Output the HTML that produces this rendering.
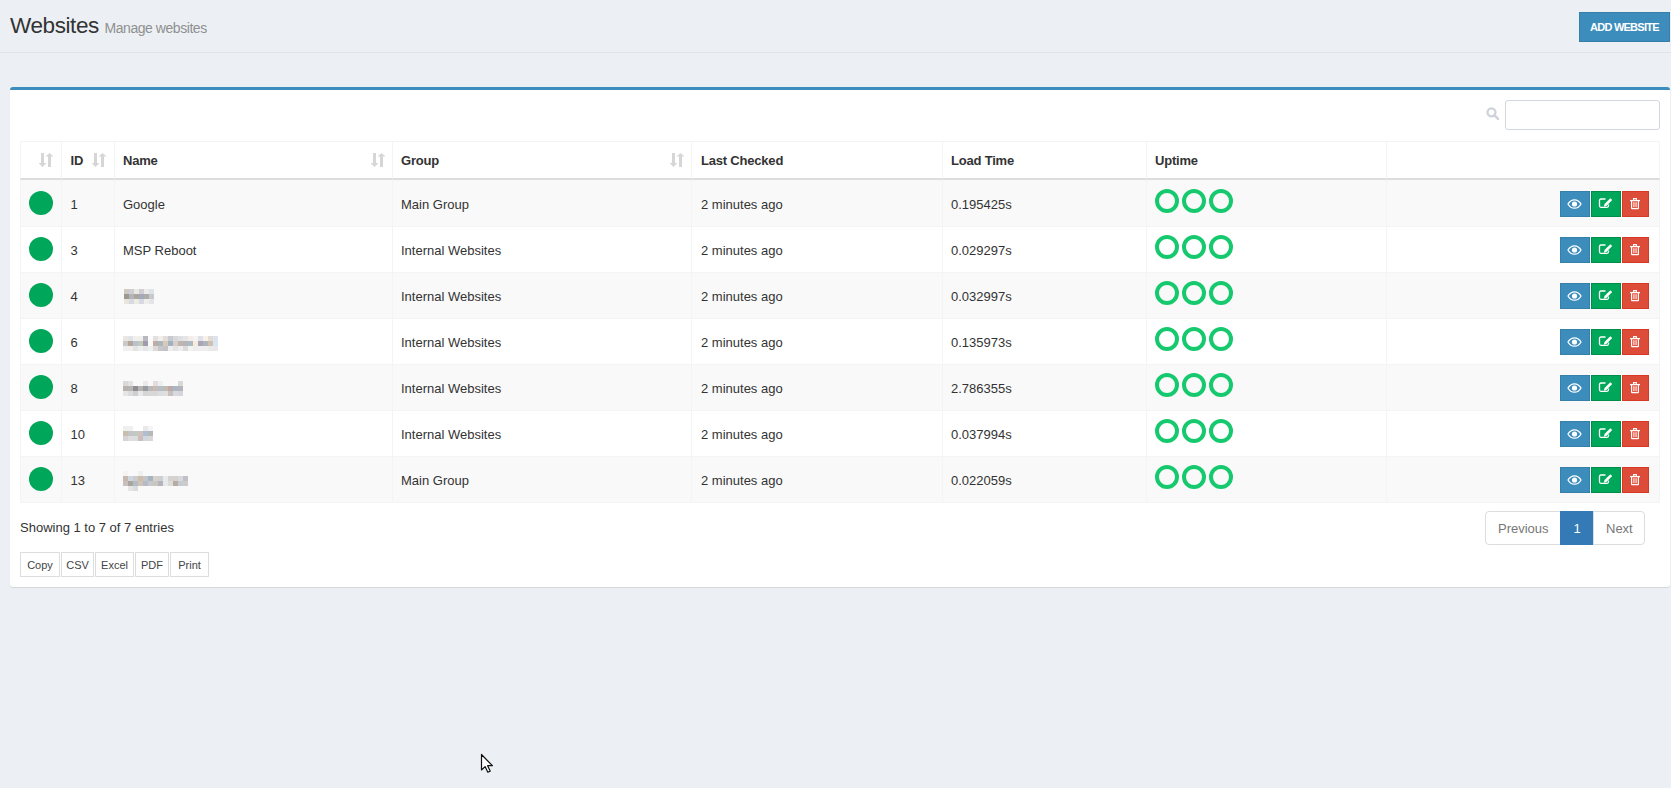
<!DOCTYPE html><html><head><meta charset="utf-8"><style>
html,body{margin:0;padding:0;width:1671px;height:788px;overflow:hidden;background:#ecf0f5;font-family:"Liberation Sans",sans-serif;}
.t{position:absolute;white-space:nowrap;line-height:1;}
.a{position:absolute;}
</style></head><body>
<div class="t" style="left:10px;top:14.55px;font-size:22.5px;color:#333;font-weight:normal;letter-spacing:-0.4px;">Websites</div>
<div class="t" style="left:104.5px;top:20.95px;font-size:14px;color:#8f8f8f;font-weight:normal;letter-spacing:-0.45px;">Manage websites</div>
<div class="a" style="left:0;top:52px;width:1671px;height:1px;background:#e0e3e7"></div>
<div class="a" style="left:1579px;top:12px;width:89px;height:28px;background:#3c8dbc;border:1px solid #367fa9;border-radius:0"></div>
<div class="t" style="left:1590px;top:21.69px;font-size:11px;color:#fff;font-weight:bold;letter-spacing:-0.75px;">ADD WEBSITE</div>
<div class="a" style="left:10px;top:87px;width:1660px;height:500px;background:#fff;border-top:3px solid #3c8dbc;border-radius:3px;box-shadow:0 1px 1px rgba(0,0,0,0.1);box-sizing:border-box"></div>
<svg class="a" style="left:1486px;top:107px" width="14" height="14" viewBox="0 0 14 14"><circle cx="5.5" cy="5.3" r="4" fill="none" stroke="#ced2db" stroke-width="2.3"/><line x1="8.4" y1="8.2" x2="12" y2="11.8" stroke="#ced2db" stroke-width="2.5" stroke-linecap="round"/></svg>
<div class="a" style="left:1505px;top:100px;width:155px;height:30px;box-sizing:border-box;border:1px solid #d2d6de;border-radius:3px;background:#fff"></div>
<div class="a" style="left:20px;top:180px;width:1639px;height:46px;background:#f9f9f9"></div>
<div class="a" style="left:20px;top:226px;width:1639px;height:46px;background:#fff"></div>
<div class="a" style="left:20px;top:272px;width:1639px;height:46px;background:#f9f9f9"></div>
<div class="a" style="left:20px;top:318px;width:1639px;height:46px;background:#fff"></div>
<div class="a" style="left:20px;top:364px;width:1639px;height:46px;background:#f9f9f9"></div>
<div class="a" style="left:20px;top:410px;width:1639px;height:46px;background:#fff"></div>
<div class="a" style="left:20px;top:456px;width:1639px;height:46px;background:#f9f9f9"></div>
<div class="a" style="left:20px;top:141px;width:1639px;height:1px;background:#f4f4f4"></div>
<div class="a" style="left:20px;top:178px;width:1639px;height:2px;background:#ddd"></div>
<div class="a" style="left:20px;top:226px;width:1639px;height:1px;background:#f4f4f4"></div>
<div class="a" style="left:20px;top:272px;width:1639px;height:1px;background:#f4f4f4"></div>
<div class="a" style="left:20px;top:318px;width:1639px;height:1px;background:#f4f4f4"></div>
<div class="a" style="left:20px;top:364px;width:1639px;height:1px;background:#f4f4f4"></div>
<div class="a" style="left:20px;top:410px;width:1639px;height:1px;background:#f4f4f4"></div>
<div class="a" style="left:20px;top:456px;width:1639px;height:1px;background:#f4f4f4"></div>
<div class="a" style="left:20px;top:502px;width:1639px;height:1px;background:#f4f4f4"></div>
<div class="a" style="left:20px;top:141px;width:1px;height:362px;background:#f4f4f4"></div>
<div class="a" style="left:61px;top:141px;width:1px;height:362px;background:#f4f4f4"></div>
<div class="a" style="left:114px;top:141px;width:1px;height:362px;background:#f4f4f4"></div>
<div class="a" style="left:392px;top:141px;width:1px;height:362px;background:#f4f4f4"></div>
<div class="a" style="left:691px;top:141px;width:1px;height:362px;background:#f4f4f4"></div>
<div class="a" style="left:942px;top:141px;width:1px;height:362px;background:#f4f4f4"></div>
<div class="a" style="left:1146px;top:141px;width:1px;height:362px;background:#f4f4f4"></div>
<div class="a" style="left:1386px;top:141px;width:1px;height:362px;background:#f4f4f4"></div>
<div class="a" style="left:1659px;top:141px;width:1px;height:362px;background:#f4f4f4"></div>
<div class="a" style="left:20px;top:178px;width:1640px;height:2px;background:#ddd"></div>
<div class="a" style="left:20px;top:178px;width:1px;height:2px;background:#e6e6e6"></div>
<div class="a" style="left:61px;top:178px;width:1px;height:2px;background:#e6e6e6"></div>
<div class="a" style="left:114px;top:178px;width:1px;height:2px;background:#e6e6e6"></div>
<div class="a" style="left:392px;top:178px;width:1px;height:2px;background:#e6e6e6"></div>
<div class="a" style="left:691px;top:178px;width:1px;height:2px;background:#e6e6e6"></div>
<div class="a" style="left:942px;top:178px;width:1px;height:2px;background:#e6e6e6"></div>
<div class="a" style="left:1146px;top:178px;width:1px;height:2px;background:#e6e6e6"></div>
<div class="a" style="left:1386px;top:178px;width:1px;height:2px;background:#e6e6e6"></div>
<div class="a" style="left:1659px;top:178px;width:1px;height:2px;background:#e6e6e6"></div>
<div class="t" style="left:70.5px;top:154.00px;font-size:13px;color:#333;font-weight:bold;letter-spacing:-0.2px;">ID</div>
<div class="t" style="left:123px;top:154.00px;font-size:13px;color:#333;font-weight:bold;letter-spacing:-0.2px;">Name</div>
<div class="t" style="left:401px;top:154.00px;font-size:13px;color:#333;font-weight:bold;letter-spacing:-0.2px;">Group</div>
<div class="t" style="left:701px;top:154.00px;font-size:13px;color:#333;font-weight:bold;letter-spacing:-0.2px;">Last Checked</div>
<div class="t" style="left:951px;top:154.00px;font-size:13px;color:#333;font-weight:bold;letter-spacing:-0.2px;">Load Time</div>
<div class="t" style="left:1155px;top:154.00px;font-size:13px;color:#333;font-weight:bold;letter-spacing:-0.2px;">Uptime</div>
<svg class="a" style="left:39px;top:152px" width="16" height="16" viewBox="0 0 16 16"><path d="M2 1h3v10h2.5l-4 4l-4-4h2.5z" fill="#d6d6d6"/><path d="M9 15h3v-10.5h2.5l-4-3.5l-4 3.5h2.5z" fill="#d6d6d6"/></svg>
<svg class="a" style="left:92px;top:152px" width="16" height="16" viewBox="0 0 16 16"><path d="M2 1h3v10h2.5l-4 4l-4-4h2.5z" fill="#d6d6d6"/><path d="M9 15h3v-10.5h2.5l-4-3.5l-4 3.5h2.5z" fill="#d6d6d6"/></svg>
<svg class="a" style="left:371px;top:152px" width="16" height="16" viewBox="0 0 16 16"><path d="M2 1h3v10h2.5l-4 4l-4-4h2.5z" fill="#d6d6d6"/><path d="M9 15h3v-10.5h2.5l-4-3.5l-4 3.5h2.5z" fill="#d6d6d6"/></svg>
<svg class="a" style="left:670px;top:152px" width="16" height="16" viewBox="0 0 16 16"><path d="M2 1h3v10h2.5l-4 4l-4-4h2.5z" fill="#d6d6d6"/><path d="M9 15h3v-10.5h2.5l-4-3.5l-4 3.5h2.5z" fill="#d6d6d6"/></svg>
<div class="a" style="left:29px;top:191px;width:24px;height:24px;border-radius:50%;background:#00a65a"></div>
<div class="t" style="left:70.5px;top:198.00px;font-size:13px;color:#333;font-weight:normal;letter-spacing:0px;">1</div>
<div class="t" style="left:123px;top:198.00px;font-size:13px;color:#333;font-weight:normal;letter-spacing:0px;">Google</div>
<div class="t" style="left:401px;top:198.00px;font-size:13px;color:#333;font-weight:normal;letter-spacing:0px;">Main Group</div>
<div class="t" style="left:701px;top:198.00px;font-size:13px;color:#333;font-weight:normal;letter-spacing:0px;">2 minutes ago</div>
<div class="t" style="left:951px;top:198.00px;font-size:13px;color:#333;font-weight:normal;letter-spacing:0px;">0.195425s</div>
<div class="a" style="left:1155px;top:189px;width:24px;height:24px;box-sizing:border-box;border-radius:50%;border:4px solid #17c96e"></div>
<div class="a" style="left:1182px;top:189px;width:24px;height:24px;box-sizing:border-box;border-radius:50%;border:4px solid #17c96e"></div>
<div class="a" style="left:1209px;top:189px;width:24px;height:24px;box-sizing:border-box;border-radius:50%;border:4px solid #17c96e"></div>
<div class="a" style="left:1560px;top:191px;width:28px;height:24px;background:#3c8dbc;border:1px solid #367fa9"></div>
<div class="a" style="left:1591px;top:191px;width:28px;height:24px;background:#00a65a;border:1px solid #008d4c"></div>
<div class="a" style="left:1622px;top:191px;width:25px;height:24px;background:#dd4b39;border:1px solid #d73925"></div>
<svg class="a" style="left:1567px;top:199px" width="15" height="10" viewBox="0 0 15 10"><path d="M1 5C3 1.5 5.2 0.8 7.5 0.8S12 1.5 14 5C12 8.5 9.8 9.2 7.5 9.2S3 8.5 1 5z" fill="none" stroke="#fff" stroke-width="1.3"/><circle cx="7.5" cy="5" r="2.6" fill="#fff"/></svg>
<svg class="a" style="left:1598px;top:197px" width="15" height="13" viewBox="0 0 15 13"><path d="M7.5 2H3Q1.5 2 1.5 3.5V8.8Q1.5 10.3 3 10.3H9Q10.5 10.3 10.5 8.8V7.5" fill="none" stroke="#fff" stroke-width="1.3"/><path d="M12.3 1.2l1.9 1.9l-5.8 5.8l-2.6 0.8l0.7-2.6z" fill="#fff"/></svg>
<svg class="a" style="left:1629px;top:197px" width="12" height="13" viewBox="0 0 12 13"><path d="M1 3.6h10" stroke="#fff" stroke-width="1.3"/><path d="M4.6 3.4V1.6h2.8V3.4" fill="none" stroke="#fff" stroke-width="1.1"/><path d="M2.6 3.8V11.2Q2.6 11.6 3 11.6H9Q9.4 11.6 9.4 11.2V3.8" fill="none" stroke="#fff" stroke-width="1.2"/><path d="M4.7 5.2V10.2M6 5.2V10.2M7.3 5.2V10.2" stroke="#fff" stroke-width="0.75"/></svg>
<div class="a" style="left:29px;top:237px;width:24px;height:24px;border-radius:50%;background:#00a65a"></div>
<div class="t" style="left:70.5px;top:244.00px;font-size:13px;color:#333;font-weight:normal;letter-spacing:0px;">3</div>
<div class="t" style="left:123px;top:244.00px;font-size:13px;color:#333;font-weight:normal;letter-spacing:0px;">MSP Reboot</div>
<div class="t" style="left:401px;top:244.00px;font-size:13px;color:#333;font-weight:normal;letter-spacing:0px;">Internal Websites</div>
<div class="t" style="left:701px;top:244.00px;font-size:13px;color:#333;font-weight:normal;letter-spacing:0px;">2 minutes ago</div>
<div class="t" style="left:951px;top:244.00px;font-size:13px;color:#333;font-weight:normal;letter-spacing:0px;">0.029297s</div>
<div class="a" style="left:1155px;top:235px;width:24px;height:24px;box-sizing:border-box;border-radius:50%;border:4px solid #17c96e"></div>
<div class="a" style="left:1182px;top:235px;width:24px;height:24px;box-sizing:border-box;border-radius:50%;border:4px solid #17c96e"></div>
<div class="a" style="left:1209px;top:235px;width:24px;height:24px;box-sizing:border-box;border-radius:50%;border:4px solid #17c96e"></div>
<div class="a" style="left:1560px;top:237px;width:28px;height:24px;background:#3c8dbc;border:1px solid #367fa9"></div>
<div class="a" style="left:1591px;top:237px;width:28px;height:24px;background:#00a65a;border:1px solid #008d4c"></div>
<div class="a" style="left:1622px;top:237px;width:25px;height:24px;background:#dd4b39;border:1px solid #d73925"></div>
<svg class="a" style="left:1567px;top:245px" width="15" height="10" viewBox="0 0 15 10"><path d="M1 5C3 1.5 5.2 0.8 7.5 0.8S12 1.5 14 5C12 8.5 9.8 9.2 7.5 9.2S3 8.5 1 5z" fill="none" stroke="#fff" stroke-width="1.3"/><circle cx="7.5" cy="5" r="2.6" fill="#fff"/></svg>
<svg class="a" style="left:1598px;top:243px" width="15" height="13" viewBox="0 0 15 13"><path d="M7.5 2H3Q1.5 2 1.5 3.5V8.8Q1.5 10.3 3 10.3H9Q10.5 10.3 10.5 8.8V7.5" fill="none" stroke="#fff" stroke-width="1.3"/><path d="M12.3 1.2l1.9 1.9l-5.8 5.8l-2.6 0.8l0.7-2.6z" fill="#fff"/></svg>
<svg class="a" style="left:1629px;top:243px" width="12" height="13" viewBox="0 0 12 13"><path d="M1 3.6h10" stroke="#fff" stroke-width="1.3"/><path d="M4.6 3.4V1.6h2.8V3.4" fill="none" stroke="#fff" stroke-width="1.1"/><path d="M2.6 3.8V11.2Q2.6 11.6 3 11.6H9Q9.4 11.6 9.4 11.2V3.8" fill="none" stroke="#fff" stroke-width="1.2"/><path d="M4.7 5.2V10.2M6 5.2V10.2M7.3 5.2V10.2" stroke="#fff" stroke-width="0.75"/></svg>
<div class="a" style="left:29px;top:283px;width:24px;height:24px;border-radius:50%;background:#00a65a"></div>
<div class="t" style="left:70.5px;top:290.00px;font-size:13px;color:#333;font-weight:normal;letter-spacing:0px;">4</div>
<div class="t" style="left:401px;top:290.00px;font-size:13px;color:#333;font-weight:normal;letter-spacing:0px;">Internal Websites</div>
<div class="t" style="left:701px;top:290.00px;font-size:13px;color:#333;font-weight:normal;letter-spacing:0px;">2 minutes ago</div>
<div class="t" style="left:951px;top:290.00px;font-size:13px;color:#333;font-weight:normal;letter-spacing:0px;">0.032997s</div>
<div class="a" style="left:1155px;top:281px;width:24px;height:24px;box-sizing:border-box;border-radius:50%;border:4px solid #17c96e"></div>
<div class="a" style="left:1182px;top:281px;width:24px;height:24px;box-sizing:border-box;border-radius:50%;border:4px solid #17c96e"></div>
<div class="a" style="left:1209px;top:281px;width:24px;height:24px;box-sizing:border-box;border-radius:50%;border:4px solid #17c96e"></div>
<div class="a" style="left:1560px;top:283px;width:28px;height:24px;background:#3c8dbc;border:1px solid #367fa9"></div>
<div class="a" style="left:1591px;top:283px;width:28px;height:24px;background:#00a65a;border:1px solid #008d4c"></div>
<div class="a" style="left:1622px;top:283px;width:25px;height:24px;background:#dd4b39;border:1px solid #d73925"></div>
<svg class="a" style="left:1567px;top:291px" width="15" height="10" viewBox="0 0 15 10"><path d="M1 5C3 1.5 5.2 0.8 7.5 0.8S12 1.5 14 5C12 8.5 9.8 9.2 7.5 9.2S3 8.5 1 5z" fill="none" stroke="#fff" stroke-width="1.3"/><circle cx="7.5" cy="5" r="2.6" fill="#fff"/></svg>
<svg class="a" style="left:1598px;top:289px" width="15" height="13" viewBox="0 0 15 13"><path d="M7.5 2H3Q1.5 2 1.5 3.5V8.8Q1.5 10.3 3 10.3H9Q10.5 10.3 10.5 8.8V7.5" fill="none" stroke="#fff" stroke-width="1.3"/><path d="M12.3 1.2l1.9 1.9l-5.8 5.8l-2.6 0.8l0.7-2.6z" fill="#fff"/></svg>
<svg class="a" style="left:1629px;top:289px" width="12" height="13" viewBox="0 0 12 13"><path d="M1 3.6h10" stroke="#fff" stroke-width="1.3"/><path d="M4.6 3.4V1.6h2.8V3.4" fill="none" stroke="#fff" stroke-width="1.1"/><path d="M2.6 3.8V11.2Q2.6 11.6 3 11.6H9Q9.4 11.6 9.4 11.2V3.8" fill="none" stroke="#fff" stroke-width="1.2"/><path d="M4.7 5.2V10.2M6 5.2V10.2M7.3 5.2V10.2" stroke="#fff" stroke-width="0.75"/></svg>
<div class="a" style="left:29px;top:329px;width:24px;height:24px;border-radius:50%;background:#00a65a"></div>
<div class="t" style="left:70.5px;top:336.00px;font-size:13px;color:#333;font-weight:normal;letter-spacing:0px;">6</div>
<div class="t" style="left:401px;top:336.00px;font-size:13px;color:#333;font-weight:normal;letter-spacing:0px;">Internal Websites</div>
<div class="t" style="left:701px;top:336.00px;font-size:13px;color:#333;font-weight:normal;letter-spacing:0px;">2 minutes ago</div>
<div class="t" style="left:951px;top:336.00px;font-size:13px;color:#333;font-weight:normal;letter-spacing:0px;">0.135973s</div>
<div class="a" style="left:1155px;top:327px;width:24px;height:24px;box-sizing:border-box;border-radius:50%;border:4px solid #17c96e"></div>
<div class="a" style="left:1182px;top:327px;width:24px;height:24px;box-sizing:border-box;border-radius:50%;border:4px solid #17c96e"></div>
<div class="a" style="left:1209px;top:327px;width:24px;height:24px;box-sizing:border-box;border-radius:50%;border:4px solid #17c96e"></div>
<div class="a" style="left:1560px;top:329px;width:28px;height:24px;background:#3c8dbc;border:1px solid #367fa9"></div>
<div class="a" style="left:1591px;top:329px;width:28px;height:24px;background:#00a65a;border:1px solid #008d4c"></div>
<div class="a" style="left:1622px;top:329px;width:25px;height:24px;background:#dd4b39;border:1px solid #d73925"></div>
<svg class="a" style="left:1567px;top:337px" width="15" height="10" viewBox="0 0 15 10"><path d="M1 5C3 1.5 5.2 0.8 7.5 0.8S12 1.5 14 5C12 8.5 9.8 9.2 7.5 9.2S3 8.5 1 5z" fill="none" stroke="#fff" stroke-width="1.3"/><circle cx="7.5" cy="5" r="2.6" fill="#fff"/></svg>
<svg class="a" style="left:1598px;top:335px" width="15" height="13" viewBox="0 0 15 13"><path d="M7.5 2H3Q1.5 2 1.5 3.5V8.8Q1.5 10.3 3 10.3H9Q10.5 10.3 10.5 8.8V7.5" fill="none" stroke="#fff" stroke-width="1.3"/><path d="M12.3 1.2l1.9 1.9l-5.8 5.8l-2.6 0.8l0.7-2.6z" fill="#fff"/></svg>
<svg class="a" style="left:1629px;top:335px" width="12" height="13" viewBox="0 0 12 13"><path d="M1 3.6h10" stroke="#fff" stroke-width="1.3"/><path d="M4.6 3.4V1.6h2.8V3.4" fill="none" stroke="#fff" stroke-width="1.1"/><path d="M2.6 3.8V11.2Q2.6 11.6 3 11.6H9Q9.4 11.6 9.4 11.2V3.8" fill="none" stroke="#fff" stroke-width="1.2"/><path d="M4.7 5.2V10.2M6 5.2V10.2M7.3 5.2V10.2" stroke="#fff" stroke-width="0.75"/></svg>
<div class="a" style="left:29px;top:375px;width:24px;height:24px;border-radius:50%;background:#00a65a"></div>
<div class="t" style="left:70.5px;top:382.00px;font-size:13px;color:#333;font-weight:normal;letter-spacing:0px;">8</div>
<div class="t" style="left:401px;top:382.00px;font-size:13px;color:#333;font-weight:normal;letter-spacing:0px;">Internal Websites</div>
<div class="t" style="left:701px;top:382.00px;font-size:13px;color:#333;font-weight:normal;letter-spacing:0px;">2 minutes ago</div>
<div class="t" style="left:951px;top:382.00px;font-size:13px;color:#333;font-weight:normal;letter-spacing:0px;">2.786355s</div>
<div class="a" style="left:1155px;top:373px;width:24px;height:24px;box-sizing:border-box;border-radius:50%;border:4px solid #17c96e"></div>
<div class="a" style="left:1182px;top:373px;width:24px;height:24px;box-sizing:border-box;border-radius:50%;border:4px solid #17c96e"></div>
<div class="a" style="left:1209px;top:373px;width:24px;height:24px;box-sizing:border-box;border-radius:50%;border:4px solid #17c96e"></div>
<div class="a" style="left:1560px;top:375px;width:28px;height:24px;background:#3c8dbc;border:1px solid #367fa9"></div>
<div class="a" style="left:1591px;top:375px;width:28px;height:24px;background:#00a65a;border:1px solid #008d4c"></div>
<div class="a" style="left:1622px;top:375px;width:25px;height:24px;background:#dd4b39;border:1px solid #d73925"></div>
<svg class="a" style="left:1567px;top:383px" width="15" height="10" viewBox="0 0 15 10"><path d="M1 5C3 1.5 5.2 0.8 7.5 0.8S12 1.5 14 5C12 8.5 9.8 9.2 7.5 9.2S3 8.5 1 5z" fill="none" stroke="#fff" stroke-width="1.3"/><circle cx="7.5" cy="5" r="2.6" fill="#fff"/></svg>
<svg class="a" style="left:1598px;top:381px" width="15" height="13" viewBox="0 0 15 13"><path d="M7.5 2H3Q1.5 2 1.5 3.5V8.8Q1.5 10.3 3 10.3H9Q10.5 10.3 10.5 8.8V7.5" fill="none" stroke="#fff" stroke-width="1.3"/><path d="M12.3 1.2l1.9 1.9l-5.8 5.8l-2.6 0.8l0.7-2.6z" fill="#fff"/></svg>
<svg class="a" style="left:1629px;top:381px" width="12" height="13" viewBox="0 0 12 13"><path d="M1 3.6h10" stroke="#fff" stroke-width="1.3"/><path d="M4.6 3.4V1.6h2.8V3.4" fill="none" stroke="#fff" stroke-width="1.1"/><path d="M2.6 3.8V11.2Q2.6 11.6 3 11.6H9Q9.4 11.6 9.4 11.2V3.8" fill="none" stroke="#fff" stroke-width="1.2"/><path d="M4.7 5.2V10.2M6 5.2V10.2M7.3 5.2V10.2" stroke="#fff" stroke-width="0.75"/></svg>
<div class="a" style="left:29px;top:421px;width:24px;height:24px;border-radius:50%;background:#00a65a"></div>
<div class="t" style="left:70.5px;top:428.00px;font-size:13px;color:#333;font-weight:normal;letter-spacing:0px;">10</div>
<div class="t" style="left:401px;top:428.00px;font-size:13px;color:#333;font-weight:normal;letter-spacing:0px;">Internal Websites</div>
<div class="t" style="left:701px;top:428.00px;font-size:13px;color:#333;font-weight:normal;letter-spacing:0px;">2 minutes ago</div>
<div class="t" style="left:951px;top:428.00px;font-size:13px;color:#333;font-weight:normal;letter-spacing:0px;">0.037994s</div>
<div class="a" style="left:1155px;top:419px;width:24px;height:24px;box-sizing:border-box;border-radius:50%;border:4px solid #17c96e"></div>
<div class="a" style="left:1182px;top:419px;width:24px;height:24px;box-sizing:border-box;border-radius:50%;border:4px solid #17c96e"></div>
<div class="a" style="left:1209px;top:419px;width:24px;height:24px;box-sizing:border-box;border-radius:50%;border:4px solid #17c96e"></div>
<div class="a" style="left:1560px;top:421px;width:28px;height:24px;background:#3c8dbc;border:1px solid #367fa9"></div>
<div class="a" style="left:1591px;top:421px;width:28px;height:24px;background:#00a65a;border:1px solid #008d4c"></div>
<div class="a" style="left:1622px;top:421px;width:25px;height:24px;background:#dd4b39;border:1px solid #d73925"></div>
<svg class="a" style="left:1567px;top:429px" width="15" height="10" viewBox="0 0 15 10"><path d="M1 5C3 1.5 5.2 0.8 7.5 0.8S12 1.5 14 5C12 8.5 9.8 9.2 7.5 9.2S3 8.5 1 5z" fill="none" stroke="#fff" stroke-width="1.3"/><circle cx="7.5" cy="5" r="2.6" fill="#fff"/></svg>
<svg class="a" style="left:1598px;top:427px" width="15" height="13" viewBox="0 0 15 13"><path d="M7.5 2H3Q1.5 2 1.5 3.5V8.8Q1.5 10.3 3 10.3H9Q10.5 10.3 10.5 8.8V7.5" fill="none" stroke="#fff" stroke-width="1.3"/><path d="M12.3 1.2l1.9 1.9l-5.8 5.8l-2.6 0.8l0.7-2.6z" fill="#fff"/></svg>
<svg class="a" style="left:1629px;top:427px" width="12" height="13" viewBox="0 0 12 13"><path d="M1 3.6h10" stroke="#fff" stroke-width="1.3"/><path d="M4.6 3.4V1.6h2.8V3.4" fill="none" stroke="#fff" stroke-width="1.1"/><path d="M2.6 3.8V11.2Q2.6 11.6 3 11.6H9Q9.4 11.6 9.4 11.2V3.8" fill="none" stroke="#fff" stroke-width="1.2"/><path d="M4.7 5.2V10.2M6 5.2V10.2M7.3 5.2V10.2" stroke="#fff" stroke-width="0.75"/></svg>
<div class="a" style="left:29px;top:467px;width:24px;height:24px;border-radius:50%;background:#00a65a"></div>
<div class="t" style="left:70.5px;top:474.00px;font-size:13px;color:#333;font-weight:normal;letter-spacing:0px;">13</div>
<div class="t" style="left:401px;top:474.00px;font-size:13px;color:#333;font-weight:normal;letter-spacing:0px;">Main Group</div>
<div class="t" style="left:701px;top:474.00px;font-size:13px;color:#333;font-weight:normal;letter-spacing:0px;">2 minutes ago</div>
<div class="t" style="left:951px;top:474.00px;font-size:13px;color:#333;font-weight:normal;letter-spacing:0px;">0.022059s</div>
<div class="a" style="left:1155px;top:465px;width:24px;height:24px;box-sizing:border-box;border-radius:50%;border:4px solid #17c96e"></div>
<div class="a" style="left:1182px;top:465px;width:24px;height:24px;box-sizing:border-box;border-radius:50%;border:4px solid #17c96e"></div>
<div class="a" style="left:1209px;top:465px;width:24px;height:24px;box-sizing:border-box;border-radius:50%;border:4px solid #17c96e"></div>
<div class="a" style="left:1560px;top:467px;width:28px;height:24px;background:#3c8dbc;border:1px solid #367fa9"></div>
<div class="a" style="left:1591px;top:467px;width:28px;height:24px;background:#00a65a;border:1px solid #008d4c"></div>
<div class="a" style="left:1622px;top:467px;width:25px;height:24px;background:#dd4b39;border:1px solid #d73925"></div>
<svg class="a" style="left:1567px;top:475px" width="15" height="10" viewBox="0 0 15 10"><path d="M1 5C3 1.5 5.2 0.8 7.5 0.8S12 1.5 14 5C12 8.5 9.8 9.2 7.5 9.2S3 8.5 1 5z" fill="none" stroke="#fff" stroke-width="1.3"/><circle cx="7.5" cy="5" r="2.6" fill="#fff"/></svg>
<svg class="a" style="left:1598px;top:473px" width="15" height="13" viewBox="0 0 15 13"><path d="M7.5 2H3Q1.5 2 1.5 3.5V8.8Q1.5 10.3 3 10.3H9Q10.5 10.3 10.5 8.8V7.5" fill="none" stroke="#fff" stroke-width="1.3"/><path d="M12.3 1.2l1.9 1.9l-5.8 5.8l-2.6 0.8l0.7-2.6z" fill="#fff"/></svg>
<svg class="a" style="left:1629px;top:473px" width="12" height="13" viewBox="0 0 12 13"><path d="M1 3.6h10" stroke="#fff" stroke-width="1.3"/><path d="M4.6 3.4V1.6h2.8V3.4" fill="none" stroke="#fff" stroke-width="1.1"/><path d="M2.6 3.8V11.2Q2.6 11.6 3 11.6H9Q9.4 11.6 9.4 11.2V3.8" fill="none" stroke="#fff" stroke-width="1.2"/><path d="M4.7 5.2V10.2M6 5.2V10.2M7.3 5.2V10.2" stroke="#fff" stroke-width="0.75"/></svg>
<div class="a" style="left:124px;top:289px;width:5px;height:5px;background:#cdc9c3"></div>
<div class="a" style="left:129px;top:289px;width:5px;height:5px;background:#d1ced3"></div>
<div class="a" style="left:134px;top:289px;width:5px;height:5px;background:#e9e9e3"></div>
<div class="a" style="left:139px;top:289px;width:5px;height:5px;background:#d1ced3"></div>
<div class="a" style="left:144px;top:289px;width:5px;height:5px;background:#ebebeb"></div>
<div class="a" style="left:149px;top:289px;width:5px;height:5px;background:#dde3e7"></div>
<div class="a" style="left:124px;top:294px;width:5px;height:5px;background:#a09890"></div>
<div class="a" style="left:129px;top:294px;width:5px;height:5px;background:#b1b5b6"></div>
<div class="a" style="left:134px;top:294px;width:5px;height:5px;background:#aba59d"></div>
<div class="a" style="left:139px;top:294px;width:5px;height:5px;background:#a2a9b8"></div>
<div class="a" style="left:144px;top:294px;width:5px;height:5px;background:#aeaca6"></div>
<div class="a" style="left:149px;top:294px;width:5px;height:5px;background:#cac8cf"></div>
<div class="a" style="left:124px;top:299px;width:5px;height:5px;background:#e8e5df"></div>
<div class="a" style="left:129px;top:299px;width:5px;height:5px;background:#d7dae1"></div>
<div class="a" style="left:134px;top:299px;width:5px;height:5px;background:#ecebe4"></div>
<div class="a" style="left:139px;top:299px;width:5px;height:5px;background:#d7dae1"></div>
<div class="a" style="left:144px;top:299px;width:5px;height:5px;background:#efeeea"></div>
<div class="a" style="left:149px;top:299px;width:5px;height:5px;background:#e5e5e9"></div>
<div class="a" style="left:123px;top:336px;width:5px;height:5px;background:#ebe6e3"></div>
<div class="a" style="left:128px;top:336px;width:5px;height:5px;background:#e1e3e7"></div>
<div class="a" style="left:133px;top:336px;width:5px;height:5px;background:#f1f0ed"></div>
<div class="a" style="left:138px;top:336px;width:5px;height:5px;background:#f0f0ee"></div>
<div class="a" style="left:143px;top:336px;width:5px;height:5px;background:#b9b8bf"></div>
<div class="a" style="left:148px;top:336px;width:5px;height:5px;background:#fbfbfb"></div>
<div class="a" style="left:153px;top:336px;width:5px;height:5px;background:#e1e1e1"></div>
<div class="a" style="left:158px;top:336px;width:5px;height:5px;background:#f0efec"></div>
<div class="a" style="left:163px;top:336px;width:5px;height:5px;background:#e3ddd8"></div>
<div class="a" style="left:168px;top:336px;width:5px;height:5px;background:#c7cbd1"></div>
<div class="a" style="left:173px;top:336px;width:5px;height:5px;background:#d8dad9"></div>
<div class="a" style="left:178px;top:336px;width:5px;height:5px;background:#dde1e4"></div>
<div class="a" style="left:183px;top:336px;width:5px;height:5px;background:#e6e6e6"></div>
<div class="a" style="left:188px;top:336px;width:5px;height:5px;background:#f3eeea"></div>
<div class="a" style="left:193px;top:336px;width:5px;height:5px;background:#f4f4f6"></div>
<div class="a" style="left:198px;top:336px;width:5px;height:5px;background:#e0e1e7"></div>
<div class="a" style="left:203px;top:336px;width:5px;height:5px;background:#f7f1ea"></div>
<div class="a" style="left:208px;top:336px;width:5px;height:5px;background:#e1dbd7"></div>
<div class="a" style="left:213px;top:336px;width:5px;height:5px;background:#dce3ec"></div>
<div class="a" style="left:123px;top:341px;width:5px;height:5px;background:#cbc9c7"></div>
<div class="a" style="left:128px;top:341px;width:5px;height:5px;background:#b8a799"></div>
<div class="a" style="left:133px;top:341px;width:5px;height:5px;background:#b6c3d1"></div>
<div class="a" style="left:138px;top:341px;width:5px;height:5px;background:#c6c8b8"></div>
<div class="a" style="left:143px;top:341px;width:5px;height:5px;background:#9f9cb1"></div>
<div class="a" style="left:148px;top:341px;width:5px;height:5px;background:#fbf9f7"></div>
<div class="a" style="left:153px;top:341px;width:5px;height:5px;background:#bfada3"></div>
<div class="a" style="left:158px;top:341px;width:5px;height:5px;background:#a9b7c1"></div>
<div class="a" style="left:163px;top:341px;width:5px;height:5px;background:#d9c9b9"></div>
<div class="a" style="left:168px;top:341px;width:5px;height:5px;background:#a2b2c0"></div>
<div class="a" style="left:173px;top:341px;width:5px;height:5px;background:#d5d0cc"></div>
<div class="a" style="left:178px;top:341px;width:5px;height:5px;background:#c2b4a8"></div>
<div class="a" style="left:183px;top:341px;width:5px;height:5px;background:#b5b5ba"></div>
<div class="a" style="left:188px;top:341px;width:5px;height:5px;background:#adbcc4"></div>
<div class="a" style="left:193px;top:341px;width:5px;height:5px;background:#f9ebd9"></div>
<div class="a" style="left:198px;top:341px;width:5px;height:5px;background:#a9a5b8"></div>
<div class="a" style="left:203px;top:341px;width:5px;height:5px;background:#adb5b8"></div>
<div class="a" style="left:208px;top:341px;width:5px;height:5px;background:#cfc0b0"></div>
<div class="a" style="left:213px;top:341px;width:5px;height:5px;background:#d6e6f5"></div>
<div class="a" style="left:123px;top:346px;width:5px;height:5px;background:#f0f0f0"></div>
<div class="a" style="left:128px;top:346px;width:5px;height:5px;background:#f3efec"></div>
<div class="a" style="left:133px;top:346px;width:5px;height:5px;background:#e4e4e4"></div>
<div class="a" style="left:138px;top:346px;width:5px;height:5px;background:#ebeff0"></div>
<div class="a" style="left:143px;top:346px;width:5px;height:5px;background:#e9e6ea"></div>
<div class="a" style="left:148px;top:346px;width:5px;height:5px;background:#eef0f0"></div>
<div class="a" style="left:153px;top:346px;width:5px;height:5px;background:#dcdbd8"></div>
<div class="a" style="left:158px;top:346px;width:5px;height:5px;background:#c9c7c5"></div>
<div class="a" style="left:163px;top:346px;width:5px;height:5px;background:#c3c4c7"></div>
<div class="a" style="left:168px;top:346px;width:5px;height:5px;background:#eeeeee"></div>
<div class="a" style="left:173px;top:346px;width:5px;height:5px;background:#e3e4e3"></div>
<div class="a" style="left:178px;top:346px;width:5px;height:5px;background:#eceef0"></div>
<div class="a" style="left:183px;top:346px;width:5px;height:5px;background:#dcdcdc"></div>
<div class="a" style="left:188px;top:346px;width:5px;height:5px;background:#f3f3f3"></div>
<div class="a" style="left:193px;top:346px;width:5px;height:5px;background:#efeeea"></div>
<div class="a" style="left:198px;top:346px;width:5px;height:5px;background:#efeef0"></div>
<div class="a" style="left:203px;top:346px;width:5px;height:5px;background:#efeeec"></div>
<div class="a" style="left:208px;top:346px;width:5px;height:5px;background:#e9e9ea"></div>
<div class="a" style="left:213px;top:346px;width:5px;height:5px;background:#e8e8ec"></div>
<div class="a" style="left:123px;top:381px;width:5px;height:5px;background:#d9d9d9"></div>
<div class="a" style="left:128px;top:381px;width:5px;height:5px;background:#e2e2e2"></div>
<div class="a" style="left:143px;top:381px;width:5px;height:5px;background:#e9e9e9"></div>
<div class="a" style="left:153px;top:381px;width:5px;height:5px;background:#e6dcdb"></div>
<div class="a" style="left:158px;top:381px;width:5px;height:5px;background:#eaf1f5"></div>
<div class="a" style="left:178px;top:381px;width:5px;height:5px;background:#d9d9d9"></div>
<div class="a" style="left:123px;top:386px;width:5px;height:5px;background:#b8b3ae"></div>
<div class="a" style="left:128px;top:386px;width:5px;height:5px;background:#b7b6b1"></div>
<div class="a" style="left:133px;top:386px;width:5px;height:5px;background:#8f8d95"></div>
<div class="a" style="left:138px;top:386px;width:5px;height:5px;background:#b6b4ae"></div>
<div class="a" style="left:143px;top:386px;width:5px;height:5px;background:#9a9ca4"></div>
<div class="a" style="left:148px;top:386px;width:5px;height:5px;background:#b9b9b9"></div>
<div class="a" style="left:153px;top:386px;width:5px;height:5px;background:#c9b9b7"></div>
<div class="a" style="left:158px;top:386px;width:5px;height:5px;background:#b5c0c6"></div>
<div class="a" style="left:163px;top:386px;width:5px;height:5px;background:#c1bbb1"></div>
<div class="a" style="left:168px;top:386px;width:5px;height:5px;background:#bba9ab"></div>
<div class="a" style="left:173px;top:386px;width:5px;height:5px;background:#a9b6c3"></div>
<div class="a" style="left:178px;top:386px;width:5px;height:5px;background:#b5b5b9"></div>
<div class="a" style="left:123px;top:391px;width:5px;height:5px;background:#e5e5e5"></div>
<div class="a" style="left:128px;top:391px;width:5px;height:5px;background:#dcdcdc"></div>
<div class="a" style="left:133px;top:391px;width:5px;height:5px;background:#d0ced3"></div>
<div class="a" style="left:138px;top:391px;width:5px;height:5px;background:#e8e8e8"></div>
<div class="a" style="left:143px;top:391px;width:5px;height:5px;background:#d5d5d5"></div>
<div class="a" style="left:148px;top:391px;width:5px;height:5px;background:#d8d8d8"></div>
<div class="a" style="left:153px;top:391px;width:5px;height:5px;background:#dad6d6"></div>
<div class="a" style="left:158px;top:391px;width:5px;height:5px;background:#dbdde0"></div>
<div class="a" style="left:163px;top:391px;width:5px;height:5px;background:#dee0e0"></div>
<div class="a" style="left:168px;top:391px;width:5px;height:5px;background:#c9bfbb"></div>
<div class="a" style="left:173px;top:391px;width:5px;height:5px;background:#d7dade"></div>
<div class="a" style="left:178px;top:391px;width:5px;height:5px;background:#d5d6d9"></div>
<div class="a" style="left:123px;top:426px;width:5px;height:5px;background:#efefef"></div>
<div class="a" style="left:128px;top:426px;width:5px;height:5px;background:#efefef"></div>
<div class="a" style="left:143px;top:426px;width:5px;height:5px;background:#e9e9e9"></div>
<div class="a" style="left:148px;top:426px;width:5px;height:5px;background:#f5f5f5"></div>
<div class="a" style="left:123px;top:431px;width:5px;height:5px;background:#c8beb0"></div>
<div class="a" style="left:128px;top:431px;width:5px;height:5px;background:#c5c5c9"></div>
<div class="a" style="left:133px;top:431px;width:5px;height:5px;background:#c3c8c2"></div>
<div class="a" style="left:138px;top:431px;width:5px;height:5px;background:#d1c2c2"></div>
<div class="a" style="left:143px;top:431px;width:5px;height:5px;background:#b0bfcf"></div>
<div class="a" style="left:148px;top:431px;width:5px;height:5px;background:#b8b8b8"></div>
<div class="a" style="left:123px;top:436px;width:5px;height:5px;background:#d6d3d2"></div>
<div class="a" style="left:128px;top:436px;width:5px;height:5px;background:#dedede"></div>
<div class="a" style="left:133px;top:436px;width:5px;height:5px;background:#dcdede"></div>
<div class="a" style="left:138px;top:436px;width:5px;height:5px;background:#ccbdbb"></div>
<div class="a" style="left:143px;top:436px;width:5px;height:5px;background:#cfd8e1"></div>
<div class="a" style="left:148px;top:436px;width:5px;height:5px;background:#d8d8d8"></div>
<div class="a" style="left:123px;top:471px;width:5px;height:5px;background:#f3f3f3"></div>
<div class="a" style="left:138px;top:471px;width:5px;height:5px;background:#efefef"></div>
<div class="a" style="left:123px;top:476px;width:5px;height:5px;background:#c5b8ae"></div>
<div class="a" style="left:128px;top:476px;width:5px;height:5px;background:#cfd6df"></div>
<div class="a" style="left:133px;top:476px;width:5px;height:5px;background:#cacccf"></div>
<div class="a" style="left:138px;top:476px;width:5px;height:5px;background:#cfbda8"></div>
<div class="a" style="left:143px;top:476px;width:5px;height:5px;background:#c3c5cc"></div>
<div class="a" style="left:148px;top:476px;width:5px;height:5px;background:#a7b5c1"></div>
<div class="a" style="left:153px;top:476px;width:5px;height:5px;background:#d6d1cb"></div>
<div class="a" style="left:158px;top:476px;width:5px;height:5px;background:#cfcfd1"></div>
<div class="a" style="left:163px;top:476px;width:5px;height:5px;background:#e5eaeb"></div>
<div class="a" style="left:168px;top:476px;width:5px;height:5px;background:#d6d2cf"></div>
<div class="a" style="left:173px;top:476px;width:5px;height:5px;background:#d5d2d0"></div>
<div class="a" style="left:178px;top:476px;width:5px;height:5px;background:#d7d9db"></div>
<div class="a" style="left:183px;top:476px;width:5px;height:5px;background:#c2c0c7"></div>
<div class="a" style="left:123px;top:481px;width:5px;height:5px;background:#c7c0bc"></div>
<div class="a" style="left:128px;top:481px;width:5px;height:5px;background:#aba59f"></div>
<div class="a" style="left:133px;top:481px;width:5px;height:5px;background:#b3bcc3"></div>
<div class="a" style="left:138px;top:481px;width:5px;height:5px;background:#cfc3b7"></div>
<div class="a" style="left:143px;top:481px;width:5px;height:5px;background:#b5bac4"></div>
<div class="a" style="left:148px;top:481px;width:5px;height:5px;background:#c6cacf"></div>
<div class="a" style="left:153px;top:481px;width:5px;height:5px;background:#c9c5c1"></div>
<div class="a" style="left:158px;top:481px;width:5px;height:5px;background:#b7b3bb"></div>
<div class="a" style="left:163px;top:481px;width:5px;height:5px;background:#e6eaeb"></div>
<div class="a" style="left:168px;top:481px;width:5px;height:5px;background:#dedcda"></div>
<div class="a" style="left:173px;top:481px;width:5px;height:5px;background:#b5aca3"></div>
<div class="a" style="left:178px;top:481px;width:5px;height:5px;background:#c5cbd0"></div>
<div class="a" style="left:183px;top:481px;width:5px;height:5px;background:#cdcccd"></div>
<div class="a" style="left:128px;top:486px;width:5px;height:5px;background:#e5e5e5"></div>
<div class="a" style="left:133px;top:486px;width:5px;height:5px;background:#dcdcdc"></div>
<div class="t" style="left:20px;top:521.00px;font-size:13px;color:#333;font-weight:normal;letter-spacing:0px;">Showing 1 to 7 of 7 entries</div>
<div class="a" style="left:20px;top:552px;width:40px;height:25px;box-sizing:border-box;border:1px solid #ddd;background:#fff"></div>
<div class="t" style="left:20px;width:40px;text-align:center;top:560.19px;font-size:11px;color:#444">Copy</div>
<div class="a" style="left:61px;top:552px;width:33px;height:25px;box-sizing:border-box;border:1px solid #ddd;background:#fff"></div>
<div class="t" style="left:61px;width:33px;text-align:center;top:560.19px;font-size:11px;color:#444">CSV</div>
<div class="a" style="left:95px;top:552px;width:39px;height:25px;box-sizing:border-box;border:1px solid #ddd;background:#fff"></div>
<div class="t" style="left:95px;width:39px;text-align:center;top:560.19px;font-size:11px;color:#444">Excel</div>
<div class="a" style="left:135px;top:552px;width:34px;height:25px;box-sizing:border-box;border:1px solid #ddd;background:#fff"></div>
<div class="t" style="left:135px;width:34px;text-align:center;top:560.19px;font-size:11px;color:#444">PDF</div>
<div class="a" style="left:170px;top:552px;width:39px;height:25px;box-sizing:border-box;border:1px solid #ddd;background:#fff"></div>
<div class="t" style="left:170px;width:39px;text-align:center;top:560.19px;font-size:11px;color:#444">Print</div>
<div class="a" style="left:1485px;top:511px;width:160px;height:34px;box-sizing:border-box;border:1px solid #ddd;border-radius:4px;background:#fff"></div>
<div class="a" style="left:1560px;top:511px;width:33px;height:34px;background:#337ab7"></div>
<div class="a" style="left:1593px;top:511px;width:1px;height:34px;background:#ddd"></div>
<div class="t" style="left:1498px;top:522.00px;font-size:13px;color:#777;font-weight:normal;letter-spacing:0px;">Previous</div>
<div class="t" style="left:1573.5px;top:522.00px;font-size:13px;color:#fff;font-weight:normal;letter-spacing:0px;">1</div>
<div class="t" style="left:1606px;top:522.00px;font-size:13px;color:#777;font-weight:normal;letter-spacing:0px;">Next</div>
<svg class="a" style="left:480px;top:753px" width="14" height="22" viewBox="0 0 14 22"><path d="M1.5 1.5V17l3.6-3.4l2.7 5.6l2.4-1.1l-2.6-5.4h4.8z" fill="#fff" stroke="#111" stroke-width="1.2" stroke-linejoin="round"/></svg>
</body></html>
